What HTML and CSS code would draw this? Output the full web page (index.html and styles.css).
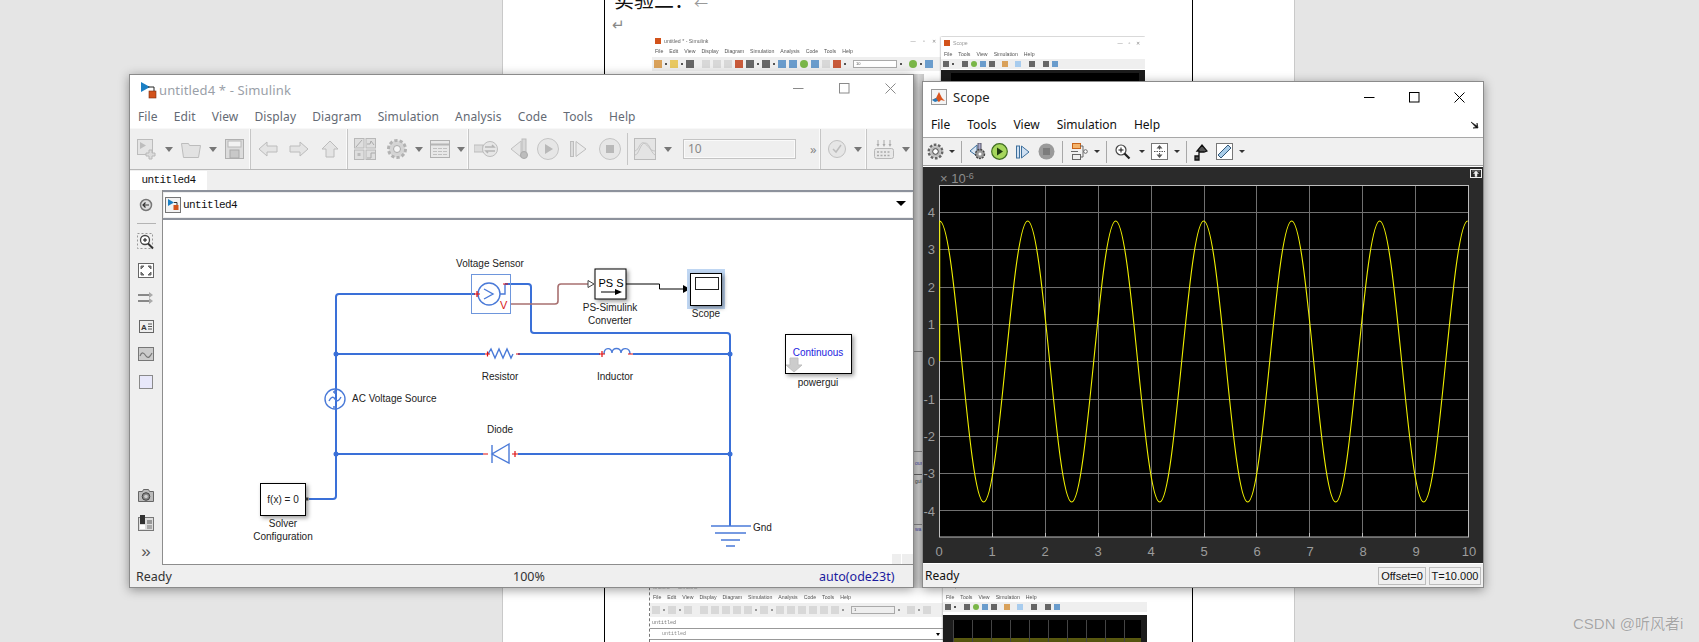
FILE: index.html
```html
<!DOCTYPE html>
<html lang="zh">
<head>
<meta charset="utf-8">
<title>Simulink and Scope</title>
<link rel="stylesheet" href="styles.css">
</head>
<body>
<div class="desktop">
  <div class="doc">
    <div class="doc-frame">
      <div class="doc-head">实验二：<span class="mark">←</span></div>
      <div class="doc-return">↵</div>
    </div>
  </div>

  <div class="thumb thumb-top">
    <div class="t-sim">
      <div class="t-title"><i class="t-logo"></i>untitled * - Simulink<span class="t-ctl">—&nbsp;&nbsp;&nbsp;&nbsp;&nbsp;▫&nbsp;&nbsp;&nbsp;&nbsp;&nbsp;✕</span></div>
      <div class="t-menu"><span>File</span><span>Edit</span><span>View</span><span>Display</span><span>Diagram</span><span>Simulation</span><span>Analysis</span><span>Code</span><span>Tools</span><span>Help</span></div>
      <div class="t-tools">
        <i class="o"></i><i class="k"></i><i class="y"></i><i class="k"></i><i class="d"></i><i class="l sp5"></i><i class="l"></i><i class="l"></i><i class="r"></i><i class="d"></i><i class="k"></i><i class="d"></i><i class="k"></i><i class="b"></i><i class="b"></i><i class="g"></i><i class="b"></i><i class="l"></i><i class="r"></i><i class="k"></i><b class="t-input sp4">10</b><i class="k"></i><i class="g sp4"></i><i class="k"></i><i class="b"></i>
      </div>
    </div>
    <div class="t-scope">
      <div class="t-title"><i class="t-logo"></i>Scope<span class="t-ctl">—&nbsp;&nbsp;&nbsp;&nbsp;▫&nbsp;&nbsp;&nbsp;&nbsp;✕</span></div>
      <div class="t-menu"><span>File</span><span>Tools</span><span>View</span><span>Simulation</span><span>Help</span></div>
      <div class="t-tools"><i class="d"></i><i class="k"></i><i class="d sp5"></i><i class="g"></i><i class="b"></i><i class="d"></i><i class="o sp4"></i><i class="h sp4"></i><i class="d sp5"></i><i class="d sp5"></i><i class="b"></i></div>
      <div class="t-plot"></div>
    </div>
  </div>

  <div class="thumb thumb-bottom">
    <div class="t-sim">
      <div class="t-title">untitled * - Simulink</div>
      <div class="t-menu"><span>File</span><span>Edit</span><span>View</span><span>Display</span><span>Diagram</span><span>Simulation</span><span>Analysis</span><span>Code</span><span>Tools</span><span>Help</span></div>
      <div class="t-tools t-pale">
        <i class="l"></i><i class="k"></i><i class="l"></i><i class="k"></i><i class="l"></i><i class="l sp5"></i><i class="l"></i><i class="l"></i><i class="l"></i><i class="l"></i><i class="k"></i><i class="l"></i><i class="k"></i><i class="l"></i><i class="l"></i><i class="l"></i><i class="l"></i><i class="l"></i><i class="l"></i><i class="k"></i><b class="t-input sp4">1</b><i class="k"></i><i class="l sp4"></i><i class="k"></i><i class="l"></i>
      </div>
      <div class="t-tab">untitled</div>
      <div class="t-crumb">untitled<i class="t-caret"></i></div>
    </div>
    <div class="t-scope">
      <div class="t-title">Scope</div>
      <div class="t-menu"><span>File</span><span>Tools</span><span>View</span><span>Simulation</span><span>Help</span></div>
      <div class="t-tools"><i class="d"></i><i class="k"></i><i class="d sp5"></i><i class="g"></i><i class="b"></i><i class="d"></i><i class="o sp4"></i><i class="h sp4"></i><i class="d sp5"></i><i class="d sp5"></i><i class="b"></i></div>
      <div class="t-plot t-plot-yellow"></div>
    </div>
  </div>

  <div class="strip"><span class="s1">ous</span><span class="s2">gui</span><span class="s3">wa</span></div>

  <!-- Simulink window -->
  <section class="window sim">
    <header class="sim-title">
      <svg class="logo" width="18" height="18" viewBox="0 0 18 18"><path d="M2 1l9 5-9 5z" fill="#1b7fc4"/><path d="M9 6h6v6" fill="none" stroke="#222"/><rect x="10" y="10" width="7" height="7" fill="#d2521a" stroke="#7a2d10" stroke-width=".6"/></svg>
      <span class="sim-title-text">untitled4 * - Simulink</span>
      <div class="sim-ctl">
        <svg width="11" height="11" viewBox="0 0 11 11"><path d="M0 5.5h10.5" stroke="#8a8a8a"/></svg>
        <svg width="11" height="11" viewBox="0 0 11 11"><rect x=".5" y=".5" width="9.5" height="9.5" fill="none" stroke="#8a8a8a"/></svg>
        <svg width="11" height="11" viewBox="0 0 11 11"><path d="M.5.5l10 10M10.5.5l-10 10" stroke="#8a8a8a"/></svg>
      </div>
    </header>
    <nav class="sim-menu"><span>File</span><span>Edit</span><span>View</span><span>Display</span><span>Diagram</span><span>Simulation</span><span>Analysis</span><span>Code</span><span>Tools</span><span>Help</span></nav>
    <div class="sim-tools">
      <div class="tg tg1">
        <svg width="20" height="22" viewBox="0 0 20 22"><rect x=".5" y="1.5" width="15" height="15" fill="#e4e4e4" stroke="#bcbcbc"/><path d="M3 4l6 3.5-6 3.5z" fill="#bdbdbd"/><path d="M12 12h3v3h3v3h-3v3h-3v-3H9v-3h3z" fill="#dcdcdc" stroke="#b8b8b8"/></svg>
        <i class="caret"></i>
        <svg width="20" height="22" viewBox="0 0 20 22"><path d="M.5 5.5h7l1 2h11l-2 12H2.500z" fill="#e2e2e2" stroke="#bcbcbc"/></svg>
        <i class="caret"></i>
        <svg class="ic-save" width="19" height="20" viewBox="0 0 19 20"><rect x=".5" y=".5" width="18" height="19" fill="#dcdcdc" stroke="#b0b0b0"/><rect x="3" y="2" width="13" height="6" fill="#f2f2f2" stroke="#b8b8b8"/><rect x="5" y="11" width="9" height="8" fill="#c8c8c8" stroke="#aaa"/></svg>
      </div>
      <div class="tg tg2">
        <svg width="20" height="18" viewBox="0 0 20 18"><path d="M1 9l8-7v4h10v6H9v4z" fill="#e4e4e4" stroke="#bcbcbc"/></svg>
        <svg width="20" height="18" viewBox="0 0 20 18"><path d="M19 9l-8-7v4H1v6h10v4z" fill="#e4e4e4" stroke="#bcbcbc"/></svg>
        <svg width="20" height="18" viewBox="0 0 20 18"><path d="M10 1l8 8h-4v8H6V9H2z" fill="#e4e4e4" stroke="#bcbcbc"/></svg>
      </div>
      <div class="tg tg3">
        <svg class="ic-lib" width="22" height="22" viewBox="0 0 22 22"><g fill="#dedede" stroke="#b8b8b8"><rect x=".5" y=".5" width="9.500" height="9.500"/><rect x="12" y=".5" width="9.500" height="9.500"/><rect x=".5" y="12" width="9.500" height="9.500"/><rect x="12" y="12" width="9.500" height="9.500"/></g><path d="M2 9l6-7M13 6h3l1-3 3 4" fill="none" stroke="#aaa"/><rect x="3.500" y="15" width="3" height="3" fill="#bbb"/><path d="M13 20h4v-5h4" fill="none" stroke="#aaa"/></svg>
        <svg width="22" height="22" viewBox="0 0 22 22"><circle cx="11" cy="11" r="8.500" fill="#d8d8d8" stroke="#b2b2b2" stroke-width="3" stroke-dasharray="3.200 2.100"/><circle cx="11" cy="11" r="6.500" fill="#d4d4d4"/><circle cx="11" cy="11" r="3.500" fill="#f4f4f4" stroke="#aaa"/></svg>
        <i class="caret"></i>
        <svg width="20" height="18" viewBox="0 0 20 18"><rect x=".5" y=".5" width="19" height="17" fill="#e8e8e8" stroke="#b0b0b0"/><path d="M1 4.500h18" stroke="#b5b5b5" stroke-width="2"/><path d="M3 8.500h14M3 11.500h14M3 14.500h14" stroke="#c0c0c0" stroke-dasharray="4 1"/></svg>
        <i class="caret"></i>
      </div>
      <div class="tg tg4">
        <svg width="24" height="18" viewBox="0 0 24 18"><rect x="0" y="5" width="9" height="7" fill="#dcdcdc" stroke="#bdbdbd"/><circle cx="16" cy="9" r="7.500" fill="#e6e6e6" stroke="#bdbdbd"/><path d="M11 7h9l-2-2M21 11h-9l2 2" fill="none" stroke="#b5b5b5" stroke-width="1.500"/></svg>
        <svg class="ml12" width="20" height="22" viewBox="0 0 20 22"><path d="M11 3L1 11l10 8z" fill="#e6e6e6" stroke="#c0c0c0"/><rect x="12" y="1" width="4" height="13" fill="#d8d8d8" stroke="#bbb"/><circle cx="14" cy="17" r="3.500" fill="#bdbdbd" stroke="#aaa"/></svg>
        <svg class="ml7" width="22" height="22" viewBox="0 0 22 22"><circle cx="11" cy="11" r="10.500" fill="#e6e6e6" stroke="#c4c4c4"/><path d="M8 6l8 5-8 5z" fill="#b8b8b8"/></svg>
        <svg class="ml11" width="17" height="18" viewBox="0 0 17 18"><rect x=".5" y="1.500" width="3" height="15" fill="#dcdcdc" stroke="#bdbdbd"/><path d="M6 1.500l10 7.500-10 7.500z" fill="#ececec" stroke="#bdbdbd"/></svg>
        <svg class="ml12" width="22" height="22" viewBox="0 0 22 22"><circle cx="11" cy="11" r="10.500" fill="#e6e6e6" stroke="#c4c4c4"/><rect x="7" y="7" width="8" height="8" fill="#b8b8b8"/></svg>
        <i class="tool-sep"></i>
        <svg class="ml6" width="22" height="22" viewBox="0 0 22 22"><rect x=".5" y=".5" width="21" height="21" fill="#e4e4e4" stroke="#bbb"/><path d="M1 17c4 0 5-12 10-12s5 9 10 12M1 13c4-1 5-10 9-8s6 8 11 8" fill="none" stroke="#c4c4c4"/></svg>
        <i class="caret ml8"></i>
        <div class="sim-input">10</div>
        <span class="more">»</span>
      </div>
      <div class="tg tg5">
        <svg width="18" height="18" viewBox="0 0 18 18"><circle cx="9" cy="9" r="8.500" fill="#e6e6e6" stroke="#c0c0c0"/><path d="M5 9l3 3 5-7" fill="none" stroke="#bdbdbd" stroke-width="1.500"/></svg>
        <i class="caret"></i>
      </div>
      <div class="tg tg6">
        <svg width="20" height="20" viewBox="0 0 20 20"><rect x=".5" y="9.500" width="19" height="10" rx="2" fill="#e8e8e8" stroke="#b8b8b8"/><path d="M3 13h14M3 16.500h14" stroke="#aaa" stroke-width="1.500" stroke-dasharray="2 1.500"/><path d="M4 1v5M10 1v5M16 1v5" stroke="#aaa"/><path d="M2.500 5h3L4 8zM8.500 5h3L10 8zM14.500 5h3L16 8z" fill="#aaa"/></svg>
        <i class="caret"></i>
      </div>
    </div>
    <div class="sim-tabs"><div class="sim-tab">untitled4</div></div>
    <div class="sim-main">
      <aside class="side">
        <svg class="side-back" width="16" height="18" viewBox="0 0 16 18"><circle cx="8" cy="9" r="5.500" fill="#ddd" stroke="#777" stroke-width="1.500"/><path d="M11 9H5M7.500 6.500L5 9l2.500 2.500" fill="none" stroke="#333" stroke-width="1.200"/></svg>
        <i class="side-sep"></i>
        <div class="side-i"><svg width="18" height="18" viewBox="0 0 18 18"><rect x=".5" y=".5" width="15" height="15" fill="none" stroke="#999" stroke-dasharray="2 2"/><circle cx="8" cy="7" r="4.500" fill="#fff" stroke="#444" stroke-width="1.300"/><path d="M6 7h4M8 5v4" stroke="#111"/><path d="M11 10.500l5 5" stroke="#333" stroke-width="2"/></svg></div>
        <div class="side-i"><svg width="16" height="15" viewBox="0 0 16 15"><rect x=".5" y=".5" width="15" height="14" fill="#fff" stroke="#666"/><path d="M3 6V3h3L3 6M13 6V3h-3l3 3M3 9v3h3L3 9M13 9v3h-3l3-3" fill="#777" stroke="#666"/></svg></div>
        <div class="side-i"><svg width="16" height="12" viewBox="0 0 16 12"><path d="M0 3h11M0 9h11" stroke="#222"/><path d="M11 0l4 3-4 3zM11 6l4 3-4 3z" fill="#aaa"/></svg></div>
        <div class="side-i"><svg width="15" height="13" viewBox="0 0 15 13"><rect x=".5" y=".5" width="14" height="12" fill="#eee" stroke="#666"/><text x="2" y="10" class="svg-a">A</text><path d="M9 4h4M9 6.500h4M9 9h4" stroke="#555"/></svg></div>
        <div class="side-i"><svg width="16" height="14" viewBox="0 0 16 14"><rect x=".5" y=".5" width="15" height="13" fill="#ccc" stroke="#777"/><path d="M2 9c2-5 4-3 6 0s4 1 6-3" fill="none" stroke="#777" stroke-width="1.200"/></svg></div>
        <div class="side-i"><i class="side-rect"></i></div>
        <div class="side-bottom">
          <div class="side-i"><svg width="16" height="13" viewBox="0 0 16 13"><path d="M.5 2.500h4l1-2h5l1 2h4v10H.5z" fill="#bbb" stroke="#666"/><circle cx="8" cy="7.500" r="3.800" fill="#888" stroke="#444"/><circle cx="8" cy="7.500" r="1.800" fill="#ccc"/></svg></div>
          <div class="side-i"><svg width="16" height="16" viewBox="0 0 16 16"><rect x=".5" y="2.500" width="15" height="13" fill="#ddd" stroke="#777"/><rect x="2" y="0" width="5" height="9" fill="#333"/><rect x="2" y="10" width="5" height="4" fill="#fff"/><rect x="9" y="5" width="5" height="4" fill="#999"/><rect x="9" y="10" width="5" height="4" fill="#aaa"/></svg></div>
          <div class="side-i side-more">»</div>
        </div>
      </aside>
      <div class="sim-body">
        <div class="crumb">
          <svg class="crumb-ic" width="16" height="16" viewBox="0 0 16 16"><rect x=".5" y=".5" width="15" height="15" fill="#f2f2f2" stroke="#777"/><path d="M3 2l6 3.500L3 9z" fill="#1b7fc4"/><path d="M9 5.500h3V9" fill="none" stroke="#333"/><rect x="8.500" y="8" width="5" height="5" fill="#d2521a"/></svg>
          <span class="crumb-text">untitled4</span>
          <i class="crumb-caret"></i>
        </div>
        <div class="canvas">
          <svg class="diagram" width="750" height="344" viewBox="163 220 750 344">
            <g class="wire">
              <path d="M475 294H339q-3 0-3 3V496q0 3-3 3H309"/>
              <path d="M336 354H485M518 354H600M633 354H730"/>
              <path d="M336 454H483M518 454H730"/>
              <path d="M505 284H528q3 0 3 3V330q0 3 3 3H727q3 0 3 3V526"/>
            </g>
            <g class="wire-thin">
              <path d="M500 294H505V284"/>
              <path d="M488 354l3-5 4 9 4-9 4 9 4-9 4 9 2-4"/>
              <path d="M604 354c0-7 8-7 8-1 0-6 9-6 9 0 0-6 9-6 9 1"/>
              <path d="M492 445V463M509 444L492 454 509 463Z"/>
              <path d="M711 526H751" />
              <path d="M715 533H746M721 540H740M726 546H735"/>
              <circle cx="489" cy="294" r="11"/>
              <circle cx="335" cy="399" r="10"/>
              <path d="M329 401c2-4 4-5 6-2s4 2 6-2"/>
              <path d="M484 289l9 5-9 5" />
              <path d="M335 390v4M333 392h4M333 407h4"/>
            </g>
            <circle class="junction" cx="336" cy="354" r="2.500"/>
            <circle class="junction" cx="336" cy="454" r="2.500"/>
            <circle class="junction" cx="730" cy="354" r="2.500"/>
            <circle class="junction" cx="730" cy="454" r="2.500"/>
            <rect class="sensor-box" x="471.500" y="274.500" width="39" height="39"/>
            <path class="wire-brown" d="M511 304H555q3 0 3-3V287q0-3 3-3H588"/>
            <g class="red"><path d="M474 294h6M477 291v6M503 284h5M485 354h5M487.500 351.500v5M516 354h4M599 354h6M602 351v6M628 354h5M483 454h5M512 454h6M515 451v6"/></g>
            <text class="label-v" x="500" y="309">V</text>

            <rect class="block" x="595" y="269" width="31" height="30"/>
            <path class="ps-port" d="M588 280.500l6 3.500-6 3.500z"/>
            <text class="txt mid ps" x="611" y="287">PS S</text>
            <path d="M601 292H616" stroke="#000"/><path d="M622 292l-7-3v6z" fill="#000"/>
            <path class="wire-black" d="M626 284H659.500V289H684"/><path d="M690 289l-7-4v8z" fill="#000"/>

            <rect class="scope-hl" x="687" y="269" width="38" height="40"/>
            <rect class="block" x="690.500" y="273.500" width="31" height="32"/>
            <rect class="scope-screen" x="695.500" y="277.500" width="23" height="12"/>

            <rect class="block" x="785.500" y="334.500" width="66" height="39"/>
            <text class="txt mid blue" x="818" y="356">Continuous</text>
            <path class="pg-arrow" d="M790 358h8v7h4l-8 7-8-7h4z"/>

            <rect class="block" x="260.500" y="483.500" width="45" height="32"/>
            <text class="txt mid" x="283" y="503">f(x) = 0</text>
            <rect x="305.500" y="497.500" width="3" height="3" fill="#333"/>

            <text class="txt mid" x="490" y="267">Voltage Sensor</text>
            <text class="txt mid" x="610" y="311">PS-Simulink</text>
            <text class="txt mid" x="610" y="324">Converter</text>
            <text class="txt mid" x="706" y="317">Scope</text>
            <text class="txt mid" x="500" y="380">Resistor</text>
            <text class="txt mid" x="615" y="380">Inductor</text>
            <text class="txt" x="352" y="402">AC Voltage Source</text>
            <text class="txt mid" x="500" y="433">Diode</text>
            <text class="txt mid" x="283" y="527">Solver</text>
            <text class="txt mid" x="283" y="540">Configuration</text>
            <text class="txt mid" x="818" y="386">powergui</text>
            <text class="txt" x="753" y="531">Gnd</text>
            <rect class="corner" x="892" y="554" width="9" height="11"/>
            <rect class="corner" x="902" y="554" width="11" height="11"/>
          </svg>
        </div>
      </div>
    </div>
    <footer class="sim-status">
      <span>Ready</span><span>100%</span>
      <span class="solver">auto(ode23t)</span>
    </footer>
  </section>

  <!-- Scope window -->
  <section class="window scope">
    <header class="sc-title">
      <svg width="16" height="16" viewBox="0 0 16 16"><rect x=".5" y=".5" width="15" height="15" fill="#f4f4f4" stroke="#999"/><path d="M1 11l4-2 3-6 3 6 3 3-4-1-2 2-3-2z" fill="#d9541e"/><path d="M1 11l4-2 2 3-3 1z" fill="#2a7ab8"/></svg>
      <span class="sc-title-text">Scope</span>
      <div class="sc-ctl">
        <svg width="11" height="11" viewBox="0 0 11 11"><path d="M0 5.500h10.500" stroke="#000"/></svg>
        <svg width="11" height="11" viewBox="0 0 11 11"><rect x=".5" y=".5" width="9.500" height="9.500" fill="none" stroke="#000"/></svg>
        <svg width="11" height="11" viewBox="0 0 11 11"><path d="M.5.500l10 10M10.500.500l-10 10" stroke="#000"/></svg>
      </div>
    </header>
    <nav class="sc-menu"><span>File</span><span>Tools</span><span>View</span><span>Simulation</span><span>Help</span>
      <svg class="sc-dock" width="8" height="8" viewBox="0 0 8 8"><path d="M0 1l6 4V2l1 5H2l3-.500z" fill="#111" stroke="#111" stroke-width=".6"/></svg>
    </nav>
    <div class="sc-tools">
      <svg width="17" height="17" viewBox="0 0 17 17"><circle cx="8.500" cy="8.500" r="6.800" fill="#ccc" stroke="#666" stroke-width="2.400" stroke-dasharray="2.600 1.700"/><circle cx="8.500" cy="8.500" r="5" fill="#bbb"/><circle cx="8.500" cy="8.500" r="2.800" fill="#fff" stroke="#444"/></svg>
      <i class="caret dark m5"></i><i class="sc-sep m6"></i>
      <svg class="m7" width="17" height="17" viewBox="0 0 17 17"><path d="M8 2L1 8l7 5z" fill="#d8e6f4" stroke="#3d6f9c"/><rect x="9" y="0" width="3" height="8" fill="#aac" stroke="#556"/><circle cx="11" cy="11" r="4.500" fill="#999" stroke="#444" stroke-width="1.400" stroke-dasharray="2 1"/><circle cx="11" cy="11" r="1.500" fill="#fff"/></svg>
      <svg class="m5" width="17" height="17" viewBox="0 0 17 17"><circle cx="8.500" cy="8.500" r="7.800" fill="#a6d65c" stroke="#3f6d21" stroke-width="1.200"/><path d="M6 4.500l6 4-6 4z" fill="#1e3a10"/></svg>
      <svg class="m8" width="14" height="14" viewBox="0 0 14 14"><rect x=".5" y="1" width="3" height="12" fill="#cfe0f2" stroke="#3d6f9c"/><path d="M5.500 1L13 7l-7.500 6z" fill="#cfe0f2" stroke="#3d6f9c"/></svg>
      <svg class="m8" width="17" height="17" viewBox="0 0 17 17"><circle cx="8.500" cy="8.500" r="8" fill="#9a9a9a"/><rect x="5" y="5" width="7" height="7" fill="#7c7c7c"/></svg>
      <i class="sc-sep m7"></i>
      <svg class="m8" width="17" height="17" viewBox="0 0 17 17"><rect x="1.500" y=".5" width="8" height="5" fill="#f4b36a" stroke="#c8641a"/><rect x="1.500" y="11.500" width="8" height="5" fill="#eee" stroke="#666"/><path d="M9 3h3v5.500h2M9 14h3V8.500M0 8.500h7" fill="none" stroke="#666"/><circle cx="14.500" cy="8.500" r="1.800" fill="#fff" stroke="#666"/></svg>
      <i class="caret dark m6"></i><i class="sc-sep m6"></i>
      <svg class="m8" width="16" height="16" viewBox="0 0 16 16"><circle cx="6" cy="6" r="5" fill="#fff" stroke="#444" stroke-width="1.200"/><path d="M3.500 6h5M6 3.500v5" stroke="#111"/><path d="M9.500 9.500l5 5" stroke="#222" stroke-width="2.200"/></svg>
      <i class="caret dark m8"></i>
      <svg class="m6" width="17" height="17" viewBox="0 0 17 17"><rect x=".5" y=".5" width="16" height="16" fill="#fff" stroke="#777"/><path d="M8.500 2l3 3.500h-6zM8.500 15l3-3.500h-6z" fill="#555"/><path d="M8.500 5v2M8.500 10v2M3 8.500h11" stroke="#555" stroke-dasharray="1.500 1"/></svg>
      <i class="caret dark m6"></i><i class="sc-sep m6"></i>
      <svg class="m7" width="14" height="18" viewBox="0 0 14 18"><path d="M1 17h4V9h5l3-1-5-6-5 6h2v5H1z" fill="#555" stroke="#111" stroke-width="1.300"/></svg>
      <svg class="m8" width="17" height="17" viewBox="0 0 17 17"><rect x=".5" y=".5" width="16" height="16" fill="#fff" stroke="#777"/><path d="M2 12L12 2l3 3L5 15z" fill="#a8cce8" stroke="#34597a"/></svg>
      <i class="caret dark m6"></i>
    </div>
    <div class="plot">
      <svg class="plot-svg" width="560" height="396" viewBox="923 167 560 396">
        <rect x="939.500" y="185.500" width="529" height="351.500" fill="#000" stroke="#bdbdbd"/>
        <path class="grid" d="M992.500 186V537M1045.500 186V537M1098.500 186V537M1151.500 186V537M1204.500 186V537M1256.500 186V537M1309.500 186V537M1362.500 186V537M1415.500 186V537"/>
        <path class="grid" d="M940 212.500H1468M940 249.500H1468M940 287.500H1468M940 324.500H1468M940 361.500H1468M940 399.500H1468M940 436.500H1468M940 473.500H1468M940 510.500H1468"/>
        <path class="ticks" d="M992.500 537v-4M1045.500 537v-4M1098.500 537v-4M1151.500 537v-4M1204.500 537v-4M1256.500 537v-4M1309.500 537v-4M1362.500 537v-4M1415.500 537v-4"/>
        <path class="trace" d="M939.700 361V221c16 0 28 281 44 281s28-281 44-281 28 281 44 281 28-281 44-281 28 281 44 281 28-281 44-281 28 281 44 281 28-281 44-281 28 281 44 281 28-281 44-281 28 281 44 281 28-281 44-281"/>
        <g class="ylab">
          <text x="935" y="217">4</text><text x="935" y="254">3</text><text x="935" y="292">2</text><text x="935" y="329">1</text><text x="935" y="366">0</text><text x="935" y="404">-1</text><text x="935" y="441">-2</text><text x="935" y="478">-3</text><text x="935" y="516">-4</text>
        </g>
        <g class="xlab">
          <text x="939" y="556">0</text><text x="992" y="556">1</text><text x="1045" y="556">2</text><text x="1098" y="556">3</text><text x="1151" y="556">4</text><text x="1204" y="556">5</text><text x="1257" y="556">6</text><text x="1310" y="556">7</text><text x="1363" y="556">8</text><text x="1416" y="556">9</text><text x="1469" y="556">10</text>
        </g>
        <text class="exp" x="940" y="183">× 10<tspan class="exp-sup" dy="-4">-6</tspan></text>
        <rect x="1470.500" y="169.500" width="11" height="8" fill="none" stroke="#eee"/>
        <path d="M1476 171l2.500 2.500h-1.500v3h-2v-3h-1.500zM1472 171h8" fill="#eee" stroke="#eee" stroke-width=".5"/>
      </svg>
    </div>
    <footer class="sc-status">
      <span class="sc-ready">Ready</span>
      <span class="sc-field">Offset=0</span>
      <span class="sc-field sc-field-t">T=10.000</span>
    </footer>
  </section>

  <div class="watermark">CSDN @听风者i</div>
</div>
</body>
</html>
```
FILE: styles.css
```css
* { box-sizing: border-box; }
html, body { margin: 0; padding: 0; }
body { font-family: "Noto Sans", "Noto Sans CJK SC", sans-serif; background: #e5e5e5; }
svg { display: block; flex: none; }
i { font-style: normal; display: block; }

.desktop { position: relative; width: 1699px; height: 642px; overflow: hidden; background: #e5e5e5; }

/* document behind the windows */
.doc { position: absolute; left: 502px; top: 0; width: 793px; height: 642px; background: #fff; border-left: 1px solid #c9c9c9; border-right: 1px solid #c9c9c9; }
.doc-frame { margin-left: 101px; width: 589px; height: 642px; border-left: 1px solid #000; border-right: 1px solid #000; }
.doc-head { font-family: "Noto Sans CJK SC", sans-serif; font-size: 20px; line-height: 28px; transform: translateY(-14px); padding-left: 9px; color: #111; }
.mark { color: #999; font-size: 14px; }
.doc-return { color: #888; font-size: 15px; line-height: 18px; padding-left: 7px; transform: translateY(-15px); }

/* miniature screenshots pasted in the document */
.thumb { position: absolute; left: 652px; width: 493px; display: flex; background: #fff; filter: blur(.4px); color: #555; font-family: "Liberation Sans", sans-serif; font-size: 5.2px; overflow: hidden; }
.thumb-top { top: 36px; height: 120px; }
.thumb-bottom { left: 649px; width: 498px; top: 582px; height: 60px; border-left: 1px dashed #777; }
.t-sim { width: 289px; flex: none; }
.thumb-bottom .t-sim { width: 293px; }
.t-scope { width: 204px; flex: none; display: flex; flex-direction: column; margin-top: 1px; box-shadow: 0 0 2px #888; }
.thumb-bottom .t-scope { margin-top: -2px; }
.t-title { height: 10px; line-height: 10px; display: flex; align-items: center; padding-left: 3px; color: #666; white-space: nowrap; }
.t-scope .t-title { height: 12px; line-height: 12px; color: #999; }
.t-logo { width: 6px; height: 6px; background: #d2521a; margin-right: 3px; flex: none; }
.t-ctl { margin-left: auto; padding-right: 5px; color: #888; }
.t-menu { display: flex; gap: 6px; height: 10px; line-height: 10px; padding-left: 3px; color: #555; }
.thumb-bottom .t-title { color: #aaa; }
.t-tools { height: 14px; background: #efefef; display: flex; align-items: center; gap: 3px; padding: 0 2px; margin-top: 1px; }
.t-scope .t-tools { height: 10px; margin-top: 0; }
.t-tools i { width: 8px; height: 8px; flex: none; }
.t-scope .t-tools i { width: 6px; height: 6px; }
.t-tools .k { width: 2px; height: 2px; background: #555; margin: 0 0; }
.t-scope .t-tools .k { width: 2px; height: 2px; }
.t-tools .o { background: #d9a15a; }
.t-tools .y { background: #e8c860; }
.t-tools .d { background: #666; }
.t-tools .l { background: #d8d8d8; }
.t-tools .r { background: #c85a3a; }
.t-tools .b { background: #6a9ccc; }
.t-tools .g { background: #7ab648; border-radius: 50%; }
.t-tools .h { background: #a8ccee; }
.t-pale .k { background: #999; }
.t-tools .sp4 { margin-left: 4px; }
.t-tools .sp5 { margin-left: 5px; }
.t-input { width: 44px; height: 8px; line-height: 6px; border: 1px solid #aaa; background: #fff; font-weight: 400; font-size: 4px; padding-left: 2px; flex: none; }
.t-pale .t-input { background: #eee; }
.t-tab { width: 26px; height: 10px; line-height: 10px; background: #fff; font-family: "Liberation Mono", monospace; font-size: 5px; padding-left: 2px; margin-top: 1px; color: #777; }
.t-crumb { height: 12px; line-height: 10px; border-top: 1px solid #999; border-bottom: 1px solid #999; font-family: "Liberation Mono", monospace; font-size: 5px; padding-left: 12px; color: #888; display: flex; align-items: center; }
.t-caret { margin-left: auto; margin-right: 3px; width: 0; height: 0; border-left: 2px solid transparent; border-right: 2px solid transparent; border-top: 3px solid #000; }
.t-plot { flex: 1; margin-top: 1px; background-color: #1c1c1c; background-image: linear-gradient(#000, #000); background-size: calc(100% - 16px) 100%; background-position: 10px 3px; background-repeat: no-repeat; }
.t-plot-yellow { background-image: repeating-linear-gradient(90deg, #444 0 1px, transparent 1px 19px), linear-gradient(transparent 18px, #5a5a10 18px, #4a4a0c 100%), linear-gradient(#000, #000); background-size: calc(100% - 16px) 100%; background-position: 10px 5px; margin-top: 3px; }

.strip { position: absolute; left: 913px; top: 74px; width: 11px; height: 514px; font-family: "Liberation Sans", sans-serif; font-size: 5px; color: #4a4aa8; background:
  linear-gradient(#8a8a8a, #8a8a8a) 0 277px / 100% 1px no-repeat,
  linear-gradient(#8a8a8a, #8a8a8a) 0 377px / 100% 1px no-repeat,
  linear-gradient(#666, #666) 0 400px / 100% 1px no-repeat,
  linear-gradient(#8a8a8a, #8a8a8a) 0 450px / 100% 1px no-repeat,
  linear-gradient(90deg, #bdbdbd, #dedede 50%, #c8c8c8); }
.strip span { display: block; padding-left: 2px; line-height: 6px; }
.strip .s1 { margin-top: 386px; }
.strip .s2 { margin-top: 12px; color: #444; }
.strip .s3 { margin-top: 42px; }

/* windows */
.window { position: absolute; background: #fff; border: 1px solid #8b8b8b; display: flex; flex-direction: column; box-shadow: 0 2px 10px rgba(0, 0, 0, .38); }
.sim { left: 129px; top: 74px; width: 785px; height: 514px; }
.scope { left: 922px; top: 81px; width: 562px; height: 507px; }

.sim-title { height: 30px; flex: none; display: flex; align-items: center; padding-left: 9px; }
.logo { margin-top: -1px; }
.sim-title-text { margin-left: 2px; font-size: 13px; color: #9aa0a8; letter-spacing: .15px; }
.sim-ctl { margin-left: auto; display: flex; gap: 35px; padding-right: 17px; margin-top: -3px; }
.sim-menu { height: 23px; flex: none; display: flex; align-items: center; gap: 16px; padding-left: 8px; font-size: 12px; letter-spacing: .12px; color: #646a74; }

.sim-tools { height: 42px; flex: none; display: flex; background: #efefef; border-top: 1px solid #f8f8f8; border-bottom: 1px solid #b8b8b8; }
.tg { display: flex; align-items: center; border-right: 1px solid #c6c6c6; box-shadow: inset -1px 0 0 #fbfbfb; flex: none; }
.tg1 { width: 121px; padding-left: 7px; gap: 8px; }
.tg2 { width: 97px; padding-left: 7px; gap: 11px; }
.tg3 { width: 121px; padding-left: 6px; gap: 7px; }
.ic-lib { margin-right: 3px; }
.tg4 { width: 352px; padding-left: 5px; }
.tg5 { width: 46px; padding-left: 7px; gap: 8px; }
.tg6 { flex: 1; padding-left: 7px; gap: 8px; border-right: 0; box-shadow: none; }
.caret { width: 0; height: 0; border-left: 4px solid transparent; border-right: 4px solid transparent; border-top: 5px solid #777; flex: none; }
.caret.dark { border-left-width: 3px; border-right-width: 3px; border-top: 3px solid #333; }
.ml6 { margin-left: 6px; } .ml7 { margin-left: 7px; } .ml8 { margin-left: 8px; } .ml11 { margin-left: 11px; } .ml12 { margin-left: 12px; }
.tool-sep { width: 1px; height: 32px; background: #c6c6c6; margin-left: 6px; }
.sim-input { width: 113px; height: 20px; margin-left: 11px; border: 1px solid #c4c4c4; outline: 1px solid #fafafa; outline-offset: -2px; background: #efefef; font-size: 12px; line-height: 18px; padding-left: 4px; color: #888; }
.more { margin-left: 14px; color: #888; font-size: 13px; line-height: 1; }

.sim-tabs { height: 20px; flex: none; background: #efefef; }
.sim-tab { width: 77px; height: 19px; background: #fff; text-align: center; line-height: 19px; font-family: "Liberation Mono", monospace; font-size: 11px; letter-spacing: -.6px; color: #111; margin-top: 1px; }

.sim-main { flex: 1; display: flex; min-height: 0; background: #efefef; }
.side { width: 32px; flex: none; display: flex; flex-direction: column; align-items: center; padding-top: 6px; background: #efefef; }
.side-sep { width: 19px; height: 1px; background: #b4b4b4; margin: 9px 0 4px; }
.side-i { height: 28px; width: 32px; display: flex; align-items: center; justify-content: center; }
.side-rect { width: 14px; height: 14px; background: #e8e8fa; border: 1px solid #8a8a8a; }
.side-bottom { margin-top: auto; }
.side-more { font-size: 17px; color: #555; line-height: 1; font-family: "Liberation Sans", sans-serif; }
.svg-a { font-family: "Liberation Sans", sans-serif; font-size: 8px; font-weight: 700; fill: #333; }

.sim-body { flex: 1; display: flex; flex-direction: column; min-width: 0; border-left: 1px solid #8d8d8d; border-bottom: 1px solid #8d8d8d; }
.crumb { height: 30px; flex: none; background: #fff; border-top: 2px solid #8d929c; border-bottom: 2px solid #8d929c; box-shadow: inset 0 0 0 1px #eee; display: flex; align-items: center; padding: 0 3px 0 2px; }
.crumb-text { margin-left: 2px; font-family: "Liberation Mono", monospace; font-size: 11px; letter-spacing: -.6px; color: #111; }
.crumb-caret { margin-left: auto; width: 0; height: 0; border-left: 5px solid transparent; border-right: 5px solid transparent; border-top: 5px solid #000; margin-right: 4px; margin-top: -3px; }

.canvas { flex: 1; background: #fff; min-height: 0; }
.diagram { font-family: "Liberation Sans", sans-serif; }
.wire { fill: none; stroke: #3a70d8; stroke-width: 2; }
.wire-thin { fill: none; stroke: #4a7ad8; stroke-width: 1.4; }
.wire-brown { fill: none; stroke: #a87070; stroke-width: 1.6; }
.wire-black { fill: none; stroke: #000; stroke-width: 1; }
.junction { fill: #3a70d8; }
.sensor-box { fill: none; stroke: #6e96dc; stroke-width: 1; }
.red { stroke: #e01010; stroke-width: 1.2; fill: none; }
.label-v { font-size: 11px; fill: #d81818; }
.block { fill: #fff; stroke: #000; stroke-width: 1; filter: drop-shadow(2px 2px 2px rgba(0, 0, 0, .4)); }
.ps-port { fill: #fff; stroke: #444; stroke-width: 1; }
.scope-hl { fill: #bfd6f2; }
.scope-screen { fill: #fff; stroke: #222; stroke-width: 1; }
.pg-arrow { fill: #ccc; stroke: #c0c0c0; }
.txt { font-size: 10px; fill: #222; }
.mid { text-anchor: middle; }
.ps { font-size: 11px; fill: #000; }
.blue { fill: #1e1ee0; }
.corner { fill: #eeeeee; }

.sim-status { height: 22px; flex: none; display: grid; grid-template-columns: 377px 306px 1fr; align-items: center; padding-left: 6px; background: #efefef; font-size: 12.5px; color: #333; }
.solver { color: #1b1b9e; }

.sc-title { height: 30px; flex: none; display: flex; align-items: center; padding-left: 8px; }
.sc-title-text { margin-left: 6px; font-size: 13px; color: #222; }
.sc-ctl { margin-left: auto; display: flex; gap: 34px; padding-right: 18px; }
.sc-menu { height: 26px; flex: none; display: flex; align-items: center; gap: 17px; padding: 0 4px 0 8px; font-size: 12px; color: #111; border-bottom: 1px solid #a8a8a8; }
.sc-dock { margin-left: auto; }
.sc-tools { height: 28px; flex: none; display: flex; align-items: center; padding-left: 4px; background: #f0f0f0; border-bottom: 1px solid #9c9c9c; }
.sc-sep { width: 1px; height: 22px; background: #a8a8a8; }
.m5 { margin-left: 5px; } .m6 { margin-left: 6px; } .m7 { margin-left: 7px; } .m8 { margin-left: 8px; }
.plot { height: 397px; flex: none; background: #2a2a2a; border-top: 1px solid #fff; }
.plot-svg { font-family: "Liberation Sans", sans-serif; }
.grid { stroke: #707070; stroke-width: 1; fill: none; }
.ticks { stroke: #bdbdbd; fill: none; }
.trace { stroke: #f0f000; stroke-width: 1.1; fill: none; }
.ylab text { text-anchor: end; font-size: 13px; fill: #9c9c9c; }
.xlab text { text-anchor: middle; font-size: 13px; fill: #9c9c9c; }
.exp { font-size: 13px; fill: #8c8c8c; }
.exp-sup { font-size: 9px; }
.sc-status { flex: 1; display: flex; align-items: center; padding: 0 2px; background: #f0f0f0; border-top: 1px solid #fff; font-size: 12px; color: #111; }
.sc-ready { margin-right: auto; }
.sc-field { height: 18px; line-height: 17px; border: 1px solid #bdbdbd; font-family: "Liberation Sans", sans-serif; font-size: 11px; width: 48px; text-align: center; white-space: nowrap; flex: none; }
.sc-field-t { width: 52px; margin-left: 3px; }

.watermark { position: absolute; left: 1573px; top: 614px; font-family: "Liberation Sans", "Noto Sans CJK SC", sans-serif; font-size: 15px; line-height: 20px; color: #a6a6a6; text-shadow: 0 0 1px #fff; white-space: nowrap; }
```
